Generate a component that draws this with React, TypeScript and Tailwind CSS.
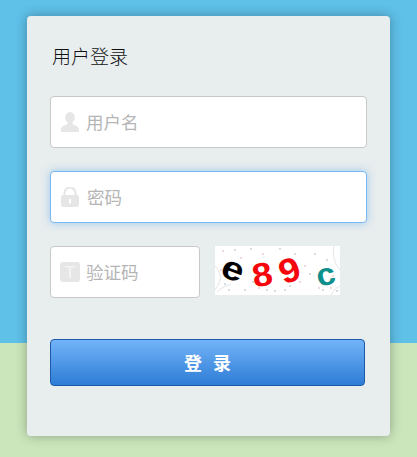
const font = "[font-family:'Noto_Sans_CJK_SC',sans-serif]";

function UserIcon() {
  return (
    <svg width="18" height="20" viewBox="0 0 18 20" className="shrink-0">
      <ellipse cx="9" cy="5.5" rx="4.8" ry="5.5" fill="#e6e6e6" />
      <path d="M6.5 10.5 L11.5 10.5 L12 12.5 C15 13.5 18 14.5 18 17 L18 20 L0 20 L0 17 C0 14.5 3 13.5 6 12.5 Z" fill="#e6e6e6" />
    </svg>
  );
}

function LockIcon() {
  return (
    <svg width="18" height="20" viewBox="0 0 18 20" className="shrink-0">
      <path d="M3.5 9 V6 a5.5 5.5 0 0 1 11 0 V9" fill="none" stroke="#e6e6e6" strokeWidth="2.2" />
      <path fillRule="evenodd" fill="#e6e6e6" d="M2 8 H16 A2 2 0 0 1 18 10 V18 A2 2 0 0 1 16 20 H2 A2 2 0 0 1 0 18 V10 A2 2 0 0 1 2 8 Z M8 12 V16.5 H10 V12 Z" />
    </svg>
  );
}

function TIcon() {
  return (
    <div className="w-5 h-5 shrink-0 rounded-[3px] bg-[#e6e6e6] flex items-center justify-center text-[#f6f6f6] text-[17px] leading-none font-['Liberation_Sans',sans-serif]">
      T
    </div>
  );
}

function Field({ icon, placeholder, focus, className, gap }: { icon: React.ReactNode; placeholder: string; focus?: boolean; className: string; gap: string }) {
  return (
    <div
      className={`h-[52px] bg-white rounded-[4px] border flex items-center ${
        focus ? "border-[#7ab8f5] shadow-[0_0_8px_rgba(102,175,233,0.6)]" : "border-[#c8c8c8]"
      } ${className}`}
    >
      <div className={`flex items-center ${gap}`}>
        {icon}
        <span className="text-[17.5px] leading-none text-[#b5b5b5]">{placeholder}</span>
      </div>
    </div>
  );
}

function Captcha() {
  const dots = [
    [8, 5], [20, 4], [36, 3], [48, 8], [10, 38], [30, 44], [44, 42], [60, 45], [75, 40], [90, 20], [100, 8], [108, 44], [118, 30], [65, 3], [56, 30], [85, 36], [38, 36], [122, 45], [6, 24], [112, 14],
    [14, 44], [26, 12], [70, 44], [95, 28], [104, 42], [52, 44], [80, 8], [116, 42],
  ];
  return (
    <div className="relative w-[125px] h-[49px] ml-[15px] bg-white overflow-hidden font-['Liberation_Sans',sans-serif] font-bold leading-none">
      <svg width="125" height="49" className="absolute inset-0">
        {dots.map(([x, y], i) => (
          <circle key={i} cx={x} cy={y} r="0.9" fill={i % 3 === 0 ? "#e8c8c8" : "#c8ccd0"} />
        ))}
        <path d="M0 20 C6 26 8 34 0 44 M2 46 C8 40 12 40 16 38" fill="none" stroke="#e4e4e4" />
        <path d="M119 0 C117 10 120 18 125 24 M125 40 C120 42 118 46 116 49" fill="none" stroke="#e4e4e4" />
      </svg>
      <span className="absolute left-[9px] top-[6px] text-[33px] text-black rotate-[20deg] scale-x-[1.2]">e</span>
      <span className="absolute left-[38px] top-[12px] text-[33px] text-[#f5060c] rotate-[-10deg] scale-x-[1.1]">8</span>
      <span className="absolute left-[65px] top-[7px] text-[34px] text-[#f5060c] rotate-[-20deg] scale-x-[1.1]">9</span>
      <span className="absolute left-[102px] top-[13px] text-[31px] text-[#0d8f8c] rotate-[-12deg] scale-x-[1.1]">c</span>
    </div>
  );
}

export default function App() {
  return (
    <div className={`w-[417px] h-[457px] overflow-hidden pt-4 pl-[27px] bg-[linear-gradient(to_bottom,#5fc0e8_343px,#cbe6bb_343px)] ${font}`}>
      <div className="w-[363px] h-[420px] bg-[#e8edee] rounded-[4px] shadow-[0_0_12px_rgba(0,0,0,0.3)] pl-[23px] pt-[28px]">
        <h1 className="h-[52px] text-[19px] leading-[24px] font-light text-[#111] pl-[2px]">用户登录</h1>
        <Field icon={<UserIcon />} placeholder="用户名" gap="ml-[10px] gap-[7px]" className="w-[317px]" />
        <Field icon={<LockIcon />} placeholder="密码" gap="ml-[10px] gap-[8px]" focus className="w-[317px] mt-[23px]" />
        <div className="flex items-start mt-[23px]">
          <Field icon={<TIcon />} placeholder="验证码" gap="ml-[9px] gap-[6px]" className="w-[150px]" />
          <Captcha />
        </div>
        <button className="mt-[41px] w-[315px] h-[47px] rounded-[4px] border border-[#1a5aa8] bg-[linear-gradient(to_bottom,#72b4f8,#2e7cd6)] text-white text-[18px] font-bold flex items-center justify-center gap-[11px]">
          <span>登</span>
          <span>录</span>
        </button>
      </div>
    </div>
  );
}
